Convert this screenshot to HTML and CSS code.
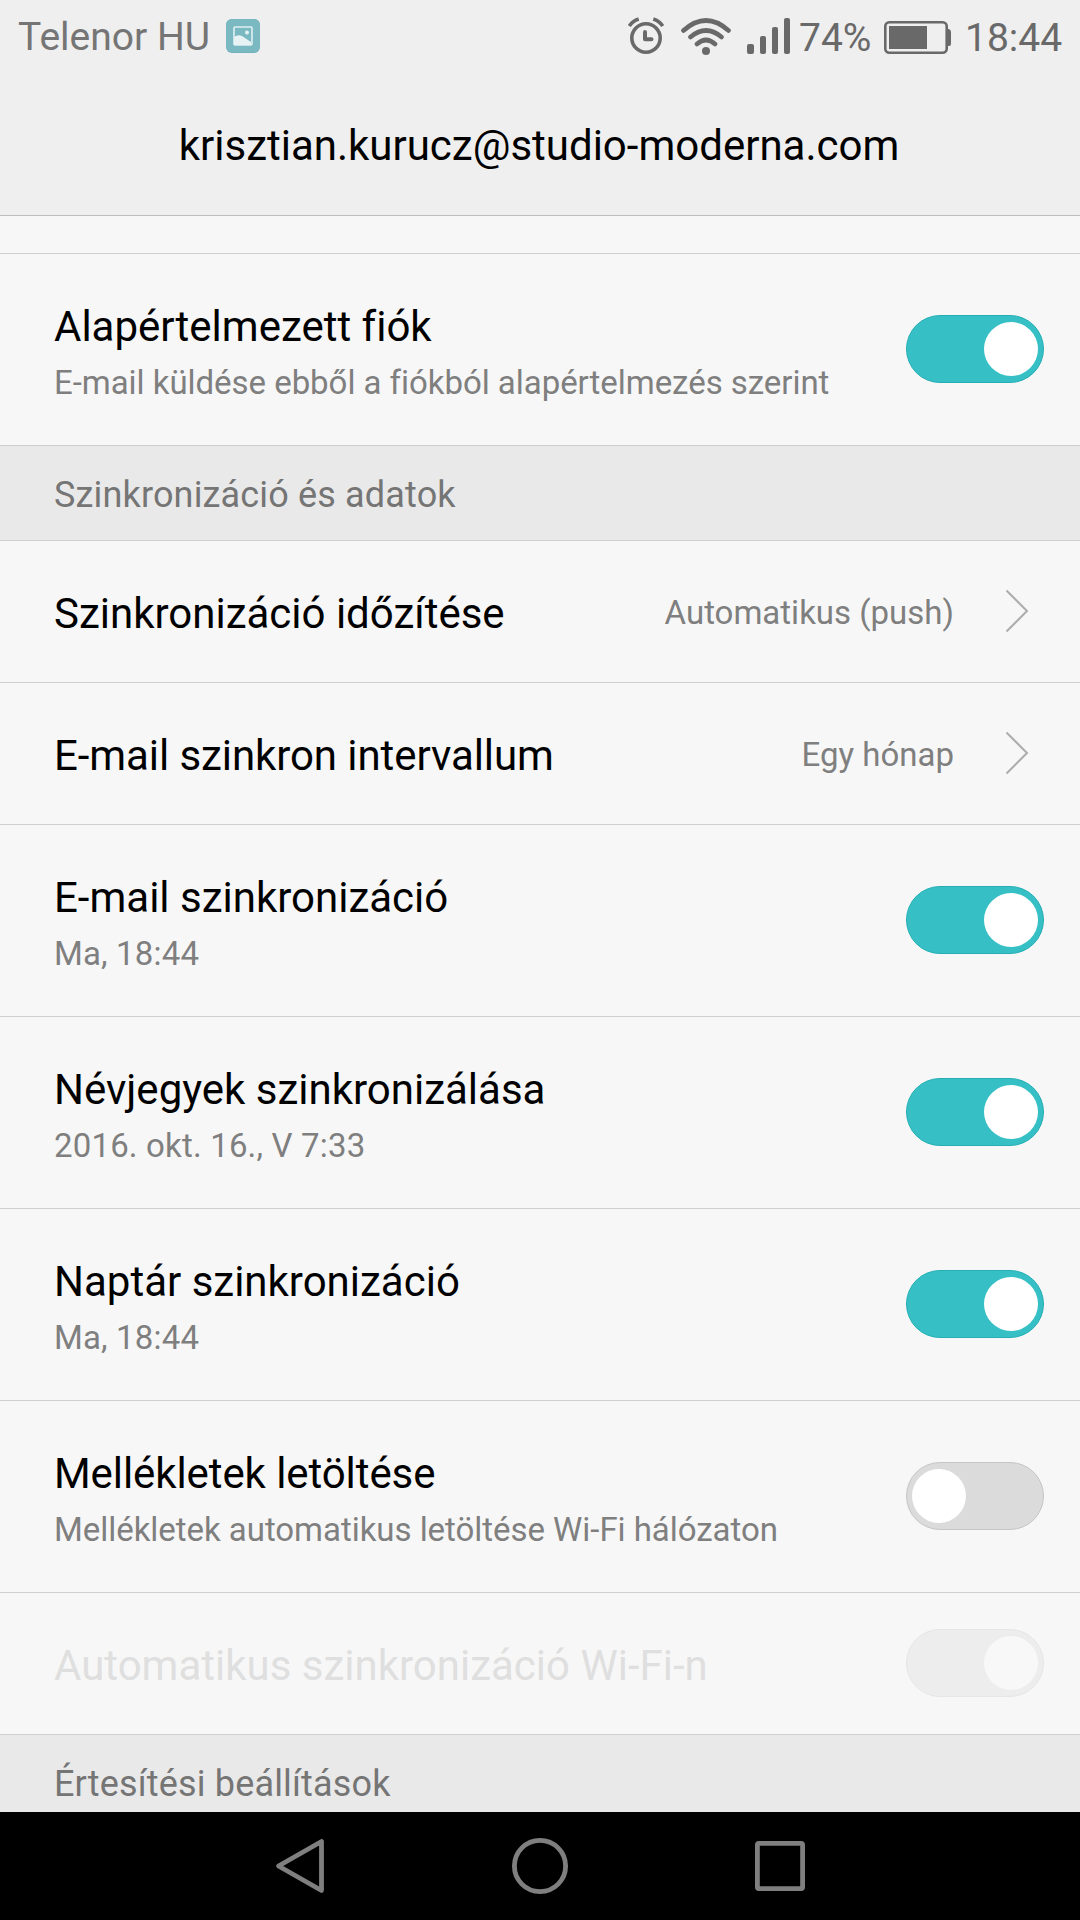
FILE: index.html
```html
<!DOCTYPE html>
<html lang="hu">
<head>
<meta charset="utf-8">
<title>Fiókbeállítások</title>
<link rel="stylesheet" href="styles.css">
</head>
<body>
<div class="screen">
  <header class="header">
    <div class="status">
      <span class="carrier">Telenor HU</span>
      <svg class="photo" width="34" height="34" viewBox="0 0 34 34">
        <rect width="34" height="34" rx="6" fill="#72b2ba"/>
        <rect y="0" width="34" height="33" rx="6" fill="#7ab9c1"/>
        <rect x="8" y="8" width="18" height="18" rx="1" fill="none" stroke="#dff0f2" stroke-width="1.600"/>
        <path d="M8 18q4-3 8-1l9 6v3H8z" fill="#e6f2f3"/>
        <circle cx="21" cy="13.500" r="2" fill="#e6f2f3"/>
      </svg>
      <span class="spacer"></span>
      <svg class="alarm" width="36" height="38" viewBox="0 0 36 38" fill="none" stroke="#696969">
        <circle cx="18" cy="21" r="14.200" stroke-width="3.600"/>
        <path d="M17 15v7.200h6.500" stroke-width="4" stroke-linecap="round" stroke-linejoin="round"/>
        <path d="M1.300 9Q4.500 4 10.700 2M34.700 9Q31.500 4 25.300 2" stroke-width="3.600"/>
      </svg>
      <svg class="wifi" width="50" height="38" viewBox="0 0 50 38" fill="none" stroke="#696969" stroke-width="4.600" stroke-linecap="round">
        <path d="M2.500 12.500Q25-7.500 47.500 12.500M9.500 19Q25 6 40.500 19M16 26Q25 18 34 26"/>
        <circle cx="25" cy="33" r="4" fill="#696969" stroke="none"/>
      </svg>
      <svg class="signal" width="43" height="36" viewBox="0 0 43 36" fill="#696969">
        <rect y="26" width="7" height="10" rx="2"/>
        <rect x="13" y="18" width="6" height="18" rx="2"/>
        <rect x="25" y="9" width="6" height="27" rx="2"/>
        <rect x="37" width="6" height="36" rx="2"/>
      </svg>
      <span class="percent">74%</span>
      <svg class="battery" width="67" height="33" viewBox="0 0 67 33">
        <rect x="1.300" y="1.300" width="61.400" height="30.400" rx="4" fill="none" stroke="#696969" stroke-width="2.600"/>
        <path d="M5 5h38v23H5zM63 8h2q2 1 2 3v12q0 2-2 2h-2z" fill="#696969"/>
      </svg>
      <span class="clock">18:44</span>
    </div>
    <h1 class="account">krisztian.kurucz@studio-moderna.com</h1>
  </header>

  <main class="list">
    <div class="stub"></div>
    <div class="row tall">
      <div class="label"><div class="name">Alapértelmezett fiók</div><div class="note">E-mail küldése ebből a fiókból alapértelmezés szerint</div></div>
      <div class="toggle on"><span class="knob"></span></div>
    </div>
    <h2 class="section">Szinkronizáció és adatok</h2>
    <div class="row">
      <div class="name">Szinkronizáció időzítése</div>
      <div class="value">Automatikus (push)</div>
      <svg class="chevron" width="24" height="44" viewBox="0 0 24 44"><path d="M1.500 1.500L22 22L1.500 42.500" fill="none" stroke="#adadad" stroke-width="2"/></svg>
    </div>
    <div class="row">
      <div class="name snug">E-mail szinkron intervallum</div>
      <div class="value">Egy hónap</div>
      <svg class="chevron" width="24" height="44" viewBox="0 0 24 44"><path d="M1.500 1.500L22 22L1.500 42.500" fill="none" stroke="#adadad" stroke-width="2"/></svg>
    </div>
    <div class="row tall">
      <div class="label"><div class="name">E-mail szinkronizáció</div><div class="note date">Ma, 18:44</div></div>
      <div class="toggle on"><span class="knob"></span></div>
    </div>
    <div class="row tall">
      <div class="label"><div class="name">Névjegyek szinkronizálása</div><div class="note date">2016. okt. 16., V 7:33</div></div>
      <div class="toggle on"><span class="knob"></span></div>
    </div>
    <div class="row tall">
      <div class="label"><div class="name">Naptár szinkronizáció</div><div class="note date">Ma, 18:44</div></div>
      <div class="toggle on"><span class="knob"></span></div>
    </div>
    <div class="row tall">
      <div class="label"><div class="name snug">Mellékletek letöltése</div><div class="note">Mellékletek automatikus letöltése Wi-Fi hálózaton</div></div>
      <div class="toggle"><span class="knob"></span></div>
    </div>
    <div class="row disabled">
      <div class="name">Automatikus szinkronizáció Wi-Fi-n</div>
      <div class="toggle on"><span class="knob"></span></div>
    </div>
    <h2 class="section">Értesítési beállítások</h2>
  </main>

  <nav class="nav">
    <svg width="50" height="56" viewBox="0 0 50 56"><path d="M46.500 3.500v49L3.500 28z" fill="none" stroke="#7f7f7f" stroke-width="4.800" stroke-linejoin="round"/></svg>
    <svg width="56" height="56" viewBox="0 0 56 56"><circle cx="28" cy="28" r="25.600" fill="none" stroke="#7f7f7f" stroke-width="4.800"/></svg>
    <svg width="50" height="50" viewBox="0 0 50 50"><rect x="2.400" y="2.400" width="45.200" height="45.200" rx="1.500" fill="none" stroke="#7f7f7f" stroke-width="4.800"/></svg>
  </nav>
</div>
</body>
</html>
```

FILE: styles.css
```css
* { box-sizing: border-box; margin: 0; }

body {
  background: #f7f7f7;
  color: #000;
  font-family: Roboto, "Liberation Sans", sans-serif;
  font-variant-ligatures: none;
}

svg { display: block; flex: none; }

.screen {
  display: flex;
  flex-direction: column;
  width: 1080px;
  height: 1920px;
  overflow: hidden;
}

.header {
  height: 216px;
  background: #efefef;
  border-bottom: 1px solid #bebebe;
}

.status {
  display: flex;
  align-items: flex-start;
  height: 121px;
  padding: 14px 18px 0;
  color: #696969;
  font-size: 39px;
  line-height: 46px;
  white-space: nowrap;
}

.carrier { color: #757575; }
.photo { margin: 5px 0 0 16px; }
.spacer { flex: 1; }
.alarm { margin: 3px 17px 0 0; }
.wifi { margin: 4px 16px 0 0; }
.signal { margin: 4px 9px 0 0; }
.percent { width: 72px; margin-top: 1px; }
.battery { margin: 7px 14px 0 13px; }
.clock { width: 97px; margin-top: 1px; }

.account {
  padding-right: 2px;
  font-size: 42px;
  font-weight: 400;
  line-height: 50px;
  text-align: center;
}

.list { height: 1596px; overflow: hidden; }

.stub {
  height: 38px;
  border-bottom: 1px solid #cfcfcf;
}

.row {
  display: flex;
  align-items: flex-start;
  height: 142px;
  padding: 0 36px 0 54px;
  border-bottom: 1px solid #cfcfcf;
  white-space: nowrap;
}

.row.tall { height: 192px; }

.name {
  flex: 1;
  margin-top: 48px;
  font-size: 42px;
  line-height: 50px;
}

.name.snug { letter-spacing: -0.08px; }

.label { flex: 1; }

.note {
  margin-top: 11px;
  color: #7f7f7f;
  font-size: 33px;
  letter-spacing: -0.04px;
  line-height: 40px;
}

.note.date { letter-spacing: 0.17px; }

.value {
  margin-top: 52px;
  color: #7f7f7f;
  font-size: 33px;
  line-height: 40px;
}

.chevron { margin: 48px 15px 0 51px; }

.section {
  height: 95px;
  padding: 27px 54px 0;
  background: #e9e9e9;
  border-bottom: 1px solid #cfcfcf;
  color: #757575;
  font-size: 36px;
  font-weight: 400;
  letter-spacing: 0.16px;
  line-height: 44px;
}

.toggle {
  display: flex;
  width: 138px;
  height: 68px;
  margin-top: 61px;
  padding: 6px 5px;
  border: 1px solid #c5c5c5;
  border-radius: 34px;
  background: #dbdbdb;
}

.toggle.on {
  justify-content: flex-end;
  background: #36c0c6;
  border-color: #25aeb4;
}

.knob {
  width: 54px;
  height: 54px;
  border-radius: 50%;
  background: #fff;
}

.disabled .name { color: #dfdfdf; }

.disabled .toggle {
  margin-top: 36px;
  background: #ededed;
  border-color: #e6e6e6;
}

.disabled .knob { background: #f8f8f8; }

.nav {
  display: flex;
  align-items: center;
  justify-content: space-between;
  height: 108px;
  padding: 0 275px;
  background: #000;
}
```
